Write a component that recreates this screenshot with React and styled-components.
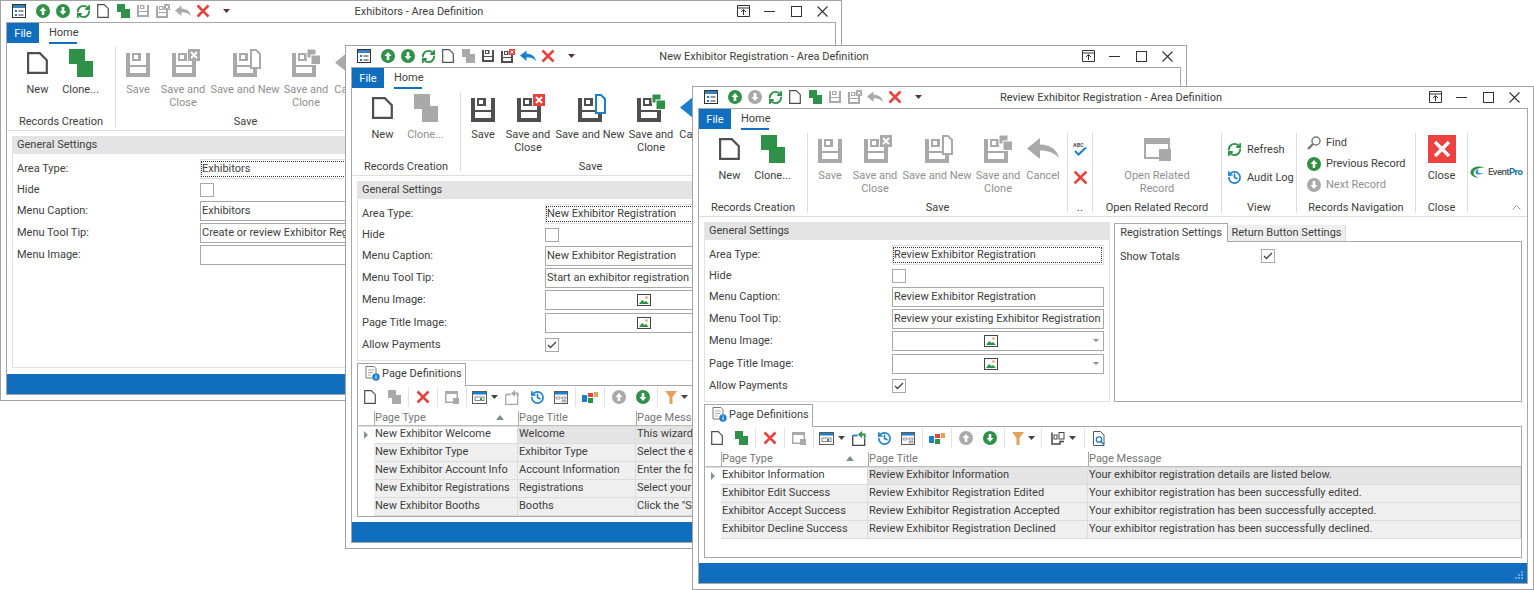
import React from 'react';
import styled, { createGlobalStyle } from 'styled-components';
import { RefreshCw, History } from 'lucide-react';

const C = { dark: '#4f4f4f', gray: '#a9a9a9', green: '#2f9148', red: '#e8403c', blue: '#1b7fcc', orange: '#e3a25c', line: '#a8a8a8', soft: '#dedede', text: '#404040' };

const GlobalStyle = createGlobalStyle`
  html, body { margin: 0; padding: 0; background: #fff; }
  body { font-family: Roboto, "Liberation Sans", sans-serif; font-size: 11px; color: ${C.text}; }
  * { box-sizing: border-box; }
`;

const Desktop = styled.div`position: relative; width: 1534px; height: 590px; overflow: hidden; background: #fff;`;
const WindowFrame = styled.section`
  position: absolute; left: ${p => p.$left}px; top: ${p => p.$top}px; width: 842px; height: ${p => p.$height}px;
  border: 1px solid #a3a3a3; background: #fff; display: flex; flex-direction: column; overflow: hidden;
`;
const TitleBar = styled.header`display: grid; grid-template-columns: 1fr auto 1fr; align-items: center; height: 20px; padding: 0 12px 0 8px; flex: none;`;
const Quick = styled.div`display: flex; align-items: center;`;
const QuickCell = styled.span`width: 20px; height: 20px; display: flex; align-items: center; justify-content: center; margin-left: ${p => p.$ml || 0}px;`;
const Title = styled.h1`margin: 0; font-size: 11px; font-weight: 400; color: ${C.text}; white-space: nowrap;`;
const Controls = styled.div`display: flex; justify-content: flex-end; margin-right: -7px;`;
const ControlCell = styled.span`width: 26.5px; height: 20px; display: flex; align-items: center; justify-content: center;`;
const Inner = styled.div`flex: 1; margin: 1px 5px 5px; border: 1px solid ${C.line}; display: flex; flex-direction: column; min-height: 0; position: relative; overflow: hidden;`;
const TabRow = styled.nav`display: flex; height: 21px; flex: none;`;
const FileTab = styled.span`width: 32px; height: 20px; background: #106ebe; color: #fff; display: flex; align-items: center; justify-content: center;`;
const HomeTab = styled.span`margin-left: 10px; width: 28px; text-align: center; height: 21px; border-bottom: 2px solid #106ebe; line-height: 19px; color: ${C.text};`;
const Ribbon = styled.div`display: flex; height: 87px; flex: none; border-bottom: 1px solid ${C.soft}; padding-top: 3px;`;
const Group = styled.div`width: ${p => p.$w}px; height: 80px; flex: none; display: flex; flex-direction: column; border-right: 1px solid ${p => p.$last ? 'transparent' : C.soft}; position: relative;`;
const GroupBody = styled.div`
  flex: 1; display: flex; min-height: 0; padding-left: ${p => p.$pl || 0}px;
  flex-direction: ${p => p.$col ? 'column' : 'row'};
  justify-content: ${p => p.$center ? 'center' : 'flex-start'};
`;
const GroupLabel = styled.div`height: 14px; line-height: 14px; margin-bottom: -2px; text-align: center; white-space: nowrap; overflow: hidden; color: ${C.text}; flex: none;`;
const Big = styled.button`
  all: unset; box-sizing: border-box; width: ${p => p.$w}px; flex: none; display: flex; flex-direction: column; align-items: center; padding-top: 2px;
  color: ${p => p.$off ? '#8f8f8f' : C.text}; text-align: center; line-height: 13px; font-size: 11px; font-family: Roboto, sans-serif;
`;
const BigIcon = styled.span`height: 28px; display: flex; align-items: flex-start; justify-content: center; margin-bottom: 6px;`;
const BigText = styled.span`white-space: pre;`;
const Small = styled.div`
  display: flex; align-items: center; gap: ${p => p.$gap || 5}px; height: ${p => p.$h}px; white-space: nowrap; color: ${p => p.$off ? '#8f8f8f' : C.text};
`;
const Stack = styled.div`display: flex; flex-direction: column; margin-top: ${p => p.$mt || 0}px; padding-left: ${p => p.$pl || 0}px;`;
const Mini = styled.span`width: 24px; height: 28px; display: flex; align-items: center; justify-content: center;`;
const LogoBox = styled.div`flex: 1; display: flex; align-items: flex-start; padding: 33px 0 0 2px; gap: 1px;`;
const LogoText = styled.span`font-size: 9.5px; font-weight: 500; letter-spacing: -0.5px; color: #555; line-height: 11px;`;
const LogoPro = styled.span`color: #1b6fa8; font-weight: 700;`;
const Collapse = styled.span`position: absolute; right: 5px; bottom: 3px; display: flex;`;
const Content = styled.div`flex: 1; min-height: 0; padding: 5px 5px 6px; display: flex; flex-direction: column;`;
const TopRow = styled.div`display: flex; gap: 4px; flex: ${p => p.$grow ? 1 : 'none'}; height: ${p => p.$grow ? 'auto' : '180px'}; min-height: 0;`;
const Panel = styled.div`width: ${p => p.$w}px; flex: none; border: 1px solid #e2e2e2; display: flex; flex-direction: column;`;
const PanelHead = styled.div`height: 18px; background: #e4e4e4; line-height: 17px; padding-left: 5px; margin: -1px -1px 0 -1px; color: ${C.text};`;
const Form = styled.div`padding: 5px 0 0 4px;`;
const Row = styled.div`display: grid; grid-template-columns: 183px ${p => p.$field}px; align-items: center; height: 20px; margin-top: ${p => p.$mt || 0}px;`;
const Label = styled.span`white-space: nowrap; color: ${C.text}; padding-bottom: 2px;`;
const Field = styled.div`
  height: 20px; border: 1px solid ${C.line}; padding-left: 1px; line-height: 18px; white-space: nowrap; overflow: hidden; color: ${C.text};
`;
const FocusField = styled.div`height: 20px; border: 1px solid #e0e0e0; padding: 1px 1px 1px 0; line-height: 14px; overflow: hidden; white-space: nowrap;`;
const FocusInner = styled.div`height: 16px; border: 1px dotted #333; line-height: 14px; overflow: hidden;`;
const ImageField = styled.div`height: 20px; border: 1px solid ${C.line}; position: relative; display: flex; align-items: center; justify-content: center; padding-right: 14px;`;
const Caret = styled.span`position: absolute; right: 4px; top: 7px; width: 0; height: 0; border: 3px solid transparent; border-top: 3px solid #8a8a8a;`;
const Check = styled.span`width: 14px; height: 14px; border: 1px solid ${C.line}; display: flex; align-items: center; justify-content: center;`;
const SidePanel = styled.div`flex: 1; min-width: 0; display: flex; flex-direction: column;`;
const SideTabs = styled.div`display: flex; height: 18px; flex: none; margin-top: 1px;`;
const SideTab = styled.span`
  width: ${p => p.$w}px; text-align: center; white-space: nowrap; line-height: ${p => p.$on ? 18 : 16}px; z-index: 1;
  ${p => p.$on
    ? `height: 19px; background: #fff; border: 1px solid ${C.line}; border-bottom: 0;`
    : `height: 16px; margin-top: 2px; background: #eee; border-right: 1px solid #ddd;`}
`;
const SideBox = styled.div`flex: 1; border: 1px solid ${C.line}; padding: 5px 5px;`;
const ToggleRow = styled.div`display: grid; grid-template-columns: 141px 20px; align-items: center; height: 18px;`;
const ToggleLabel = styled.span`white-space: nowrap;`;
const Bottom = styled.div`height: 154px; flex: none; margin-top: 2px; display: flex; flex-direction: column;`;
const DefTab = styled.div`width: 109px; height: 23px; margin-bottom: -1px; border: 1px solid ${C.line}; border-bottom: 0; display: flex; align-items: center; gap: 2px; padding: 0 0 3px 7px; background: #fff; z-index: 1; flex: none; white-space: nowrap;`;
const DefBox = styled.div`flex: 1; min-height: 0; border: 1px solid ${C.line}; overflow: hidden; background: #fff;`;
const Toolbar = styled.div`height: 25px; padding-bottom: 3px; display: flex; align-items: center;`;
const Tool = styled.span`width: ${p => p.$w || 24}px; height: 22px; display: flex; align-items: center; justify-content: center; gap: 4px; flex: none;`;
const ToolSep = styled.span`width: 1px; height: 20px; background: #e2e2e2; margin: 0 2px; flex: none;`;
const GridRow = styled.div`display: grid; grid-template-columns: 16px ${p => p.$type}px ${p => p.$title}px 1fr;`;
const Head = styled.div`height: 15px; line-height: 14px; border-bottom: 1px solid #bdbdbd; color: #767676; position: relative; white-space: nowrap; box-shadow: 0 1px 0 #dcdcdc; border-left: 1px solid ${p => p.$first ? 'transparent' : '#aaa'}; overflow: hidden;`;
const Sort = styled.span`position: absolute; right: 14px; top: 4px; width: 0; height: 0; border: 4.5px solid transparent; border-top: 0; border-bottom: 5px solid #7c9088;`;
const Cell = styled.div`
  height: 18px; line-height: 15px; padding-left: 1px; white-space: nowrap; overflow: hidden; color: ${C.text}; border-bottom: 1px solid #dcdcdc; border-right: 1px solid #dcdcdc;
  background: ${p => p.$tone === 'plain' ? '#fff' : p.$tone === 'sel' ? '#e4e4e4' : '#efefef'};
`;
const Indicator = styled.div`height: 18px; display: flex; align-items: center; padding-left: 6px;`;
const IndicatorArrow = styled.span`width: 0; height: 0; border: 4px solid transparent; border-right: 0; border-left: 4px solid #84948c;`;
const Status = styled.footer`height: 20px; background: #106ebe; flex: none;`;
const Grip = styled.span`position: absolute; right: 3px; bottom: 3px; display: flex;`;

const Ico = ({ w = 16, h = 16, vb, children }) => <svg width={w} height={h} viewBox={vb || `0 0 ${w} ${h}`} fill="none" aria-hidden="true">{children}</svg>;

const FLOPPY = 'M0 0h4v12h16V0h4v24H0z M4 14v6h16v-6z M6 0h9v8H6z M8 2v4h4V2z';
const Floppy = ({ c }) => <path fillRule="evenodd" fill={c} d={FLOPPY} />;
const SaveBig = ({ c }) => <Ico w={24} h={28}><g transform="translate(0 4)"><Floppy c={c} /></g></Ico>;
const SaveCloseBig = ({ c, mark }) => (
  <Ico w={33} h={28} vb="-5 0 33 28"><g transform="translate(0 4)"><Floppy c={c} /></g><rect x="16" y="0" width="12" height="12" fill={mark} /><path d="M19 3l6 6M25 3l-6 6" stroke="#fff" strokeWidth="2" /></Ico>
);
const SaveNewBig = ({ c, mark }) => (
  <Ico w={32} h={28} vb="-4 0 32 28"><g transform="translate(0 4)"><Floppy c={c} /></g><path d="M17 0h7l4 4v16H17z" fill="#fff" /><path d="M18 1h5l4 4v14H18z" fill="#fff" stroke={mark} strokeWidth="2" /></Ico>
);
const SaveCloneBig = ({ c, mark }) => (
  <Ico w={29} h={28}><g transform="translate(0 4)"><Floppy c={c} /></g><rect x="15" y="0" width="9" height="9" fill={mark} stroke="#fff" /><rect x="19" y="6" width="9.500" height="9.500" fill={mark} stroke="#fff" /></Ico>
);
const CancelBig = ({ c }) => <Ico w={32} h={28}><path fill={c} d="M0 13.500L13 3v6.500c10 0 17 5 19 13.500-5-5.500-11-7.500-19-7.500V24z" /></Ico>;
const DocBig = () => <Ico w={21} h={28}><path d="M1.100 4.100h11.700l7 7v12.800H1.100z" stroke={C.dark} strokeWidth="2.200" strokeMiterlimit="10" fill="#fff" /></Ico>;
const CloneBig = ({ c }) => <Ico w={24} h={28}><rect x="0" y="0" width="16" height="15" fill={c} /><rect x="8" y="12" width="16" height="16" fill={c} /></Ico>;
const RelatedBig = ({ c }) => <Ico w={28} h={28}><rect x="1" y="3" width="26" height="6" fill={c} /><rect x="1" y="3" width="2" height="21" fill={c} /><rect x="1" y="22" width="15" height="2" fill={c} /><rect x="25" y="3" width="2" height="11" fill={c} /><rect x="16" y="14" width="12" height="12" fill={c} /></Ico>;
const CloseBig = () => <Ico w={28} h={28}><rect width="28" height="28" fill="#ef4140" /><path d="M7 7l14 14M21 7L7 21" stroke="#fff" strokeWidth="3.400" /></Ico>;
const RedX = ({ s = 14, c = C.red }) => <Ico w={s} h={s} vb="0 0 14 14"><path d="M1.500 1.500l11 11M12.500 1.500l-11 11" stroke={c} strokeWidth="2.500" /></Ico>;
const Circle = ({ dir, c }) => <Ico w={14} h={14}><circle cx="7" cy="7" r="7" fill={c} /><path d={dir === 'up' ? 'M7 3L3.500 7h2.200v4h2.600V7h2.200z' : 'M7 11L3.500 7h2.200V3h2.600v4h2.200z'} fill="#fff" /></Ico>;
const Doc = () => <Ico w={12} h={14}><path d="M.700.700h6.600l4 4v8.600H.700z" stroke={C.dark} strokeWidth="1.200" fill="#fff" /></Ico>;
const Clone = ({ c }) => <Ico w={13} h={14}><rect width="8" height="8" fill={c} /><rect x="4" y="5" width="9" height="9" fill={c} /></Ico>;
const SaveSmall = ({ c }) => <Ico w={12} h={12} vb="0 0 24 24"><Floppy c={c} /></Ico>;
const SaveCloseSmall = ({ c, mark }) => <Ico w={14} h={14}><g transform="translate(0 2) scale(.5)"><Floppy c={c} /></g><rect x="8" y="0" width="6" height="6" fill={mark} /><path d="M9.500 1.500l3 3M12.500 1.500l-3 3" stroke="#fff" /></Ico>;
const Undo = ({ c }) => <Ico w={16} h={12} vb="0 0 32 24"><path fill={c} d="M0 11L13 1v6.500c10 0 17 5 19 14.500-5-5.500-11-7.500-19-7.500V22z" /></Ico>;
const AppIcon = () => <Ico w={14} h={14}><rect x=".500" y=".500" width="13" height="13" fill="#fff" stroke="#333" /><rect x="1" y="1" width="12" height="3" fill="#3a80bc" /><rect x="3" y="6" width="2" height="2" fill={C.blue} /><rect x="3" y="10" width="2" height="2" fill={C.blue} /><path d="M6.500 7h5M6.500 11h5" stroke="#333" /></Ico>;
const DropCaret = ({ c = '#55333a' }) => <Ico w={7} h={4}><path d="M0 0h7L3.500 4z" fill={c} /></Ico>;
const Pin = () => <Ico w={13} h={12}><path d="M.500 .500h12v11H.500zM.500 3h12" stroke="#333" /><path d="M6.500 10V5M4 7l2.500-2.500L9 7" stroke="#333" /></Ico>;
const Min = () => <Ico w={11} h={3}><path d="M0 1.500h11" stroke="#333" /></Ico>;
const Max = () => <Ico w={11} h={11}><rect x=".500" y=".500" width="10" height="10" stroke="#333" /></Ico>;
const WinX = () => <Ico w={11} h={11}><path d="M.500 .500l10 10M10.500 .500l-10 10" stroke="#333" strokeWidth="1.100" /></Ico>;
const Spell = () => <Ico w={16} h={16}><text x="1" y="6" fontSize="5.500" fontWeight="700" fill="#555" fontFamily="Roboto, sans-serif">ABC</text><path d="M3 10l3.500 3.500L14 6.500" stroke={C.blue} strokeWidth="2" /></Ico>;
const Find = () => <Ico w={14} h={14}><circle cx="9" cy="5" r="4" stroke="#777" strokeWidth="1.500" fill="#fff" /><path d="M6 8L1 13" stroke="#777" strokeWidth="2.400" /></Ico>;
const Swirl = () => <Ico w={17} h={12}><path d="M15 1.500C9 -1 1 1 .500 6c-.300 3 3 5.500 8 5.500C4 10 3 7.500 4 5.500 5.500 3 10 1.500 15 1.500z" fill="#2f9148" /><path d="M9 3.500c-3 0-4 2.500-3 4 2 1.500 5 1 8-.500-3 .500-5 .500-6-.500-.500-1 0-2.200 1-3z" fill="#1b7fcc" /></Ico>;
const Chevron = () => <Ico w={9} h={5}><path d="M.500 4.500l4-4 4 4" stroke="#999" /></Ico>;
const ImageIcon = () => <Ico w={14} h={12}><rect x=".500" y=".500" width="13" height="11" fill="#fff" stroke="#444" /><path d="M2 10l3-4 2.500 2 1.500-1 3 3z" fill={C.green} /><circle cx="9.500" cy="3.500" r="1.300" fill={C.orange} /></Ico>;
const Tick = () => <Ico w={10} h={8}><path d="M1 4l2.500 2.500L9 1" stroke="#444" strokeWidth="1.300" /></Ico>;
const PageInfo = () => <Ico w={15} h={15}><path d="M1 .500h8l2 2v9.500H1z" fill="#fff" stroke="#777" /><path d="M3 4h6M3 6.500h5M3 9h3" stroke="#aaa" /><circle cx="11" cy="11" r="3.700" fill={C.blue} /><path d="M11 10v3M11 8.500v1" stroke="#fff" /></Ico>;
const RelatedSmall = () => <Ico w={14} h={13}><rect x="0" y="0" width="13" height="3" fill={C.gray} /><rect x="0" y="0" width="1.500" height="12" fill={C.gray} /><rect x="0" y="10.500" width="8" height="1.500" fill={C.gray} /><rect x="11.500" y="0" width="1.500" height="7" fill={C.gray} /><rect x="8" y="7" width="6" height="6" fill={C.gray} /></Ico>;
const FormIcon = () => <Ico w={15} h={13}><rect x=".500" y=".500" width="14" height="12" fill="#fff" stroke="#5b5b5b" /><rect x="1" y="1" width="13" height="2.500" fill={C.blue} /><rect x="3" y="6" width="9" height="3.500" stroke="#888" /><rect x="8" y="7" width="2" height="2" fill={C.green} /></Ico>;
const ExportIcon = ({ c, a, t }) => <Ico w={16} h={15}><path d="M.700 4.500v10h12V8" stroke={c} strokeWidth="1.300" /><path d="M.700 4.500h5" stroke={t} strokeWidth="1.800" /><path d="M9.500 3.500h3.200v4" stroke={a} strokeWidth="1.800" /><path d="M10 0L5.800 3.500 10 7z" fill={a} /></Ico>;
const LayoutIcon = () => <Ico w={14} h={13}><rect x=".500" y=".500" width="13" height="12" fill="#fff" stroke="#5b5b5b" /><rect x="1" y="1" width="12" height="2.500" fill={C.blue} /><path d="M2 6h4v2H2zM8 6h4v2H8zM8 9.500h4v1.500H8z" stroke="#777" strokeWidth=".700" /></Ico>;
const Blocks = () => <Ico w={16} h={11}><rect x="0" y="3" width="5" height="7" fill={C.blue} /><rect x="6" y="1" width="5" height="4" fill={C.red} /><rect x="6" y="6" width="5" height="5" fill={C.green} /><rect x="12" y="0" width="4" height="5" fill={C.orange} /></Ico>;
const Funnel = () => <Ico w={12} h={13}><path d="M0 0h12L7.500 6v7H4.500V6z" fill={C.orange} /></Ico>;
const ColumnsIcon = () => <Ico w={14} h={13}><path d="M1 .500v11.500h8v-2.500h4" stroke="#444" strokeWidth="1.500" /><rect x="3" y="3" width="3" height="4" stroke="#444" /><rect x="8" y=".500" width="5" height="6.500" stroke="#444" /></Ico>;
const PreviewIcon = () => <Ico w={13} h={15}><path d="M.500 .500h7l3.500 3.500v10.500H.500z" stroke="#4a5a70" fill="#fff" /><circle cx="6" cy="8.500" r="2.700" stroke={C.blue} strokeWidth="1.300" /><path d="M8 10.500l3 3" stroke={C.blue} strokeWidth="1.500" /></Ico>;
const GripDots = () => <Ico w={10} h={10}><g fill="#6fa5d4"><rect x="7" y="1" width="2" height="2" /><rect x="4" y="4" width="2" height="2" /><rect x="7" y="4" width="2" height="2" /><rect x="1" y="7" width="2" height="2" /><rect x="4" y="7" width="2" height="2" /><rect x="7" y="7" width="2" height="2" /></g></Ico>;

const WINDOWS = [
  {
    id: 'exhibitors', left: 0, top: 0, height: 401, title: 'Exhibitors - Area Definition', panel: 816, field: 606,
    upOn: true, downOn: true, cloneOn: true, saveOn: false,
    area: 'Exhibitors', caption: 'Exhibitors', tip: 'Create or review Exhibitor Registrations',
  },
  {
    id: 'new', left: 345, top: 45, height: 504, title: 'New Exhibitor Registration - Area Definition', panel: 406, field: 212,
    upOn: true, downOn: true, cloneOn: false, saveOn: true,
    area: 'New Exhibitor Registration', caption: 'New Exhibitor Registration', tip: 'Start an exhibitor registration', full: true,
    type: 144, titleCol: 118, exportOn: false,
    rows: [
      ['New Exhibitor Welcome', 'Welcome', 'This wizard will guide you through your registration.'],
      ['New Exhibitor Type', 'Exhibitor Type', 'Select the exhibitor type.'],
      ['New Exhibitor Account Info', 'Account Information', 'Enter the following details.'],
      ['New Exhibitor Registrations', 'Registrations', 'Select your registrations.'],
      ['New Exhibitor Booths', 'Booths', 'Click the "Select" button.'],
      ['', '', ''],
    ],
  },
  {
    id: 'review', left: 692, top: 86, height: 504, title: 'Review Exhibitor Registration - Area Definition', panel: 406, field: 212,
    upOn: true, downOn: false, cloneOn: true, saveOn: false, grip: true,
    area: 'Review Exhibitor Registration', caption: 'Review Exhibitor Registration', tip: 'Review your existing Exhibitor Registration', full: true, side: true,
    type: 147, titleCol: 220, exportOn: true,
    rows: [
      ['Exhibitor Information', 'Review Exhibitor Information', 'Your exhibitor registration details are listed below.'],
      ['Exhibitor Edit Success', 'Review Exhibitor Registration Edited', 'Your exhibitor registration has been successfully edited.'],
      ['Exhibitor Accept Success', 'Review Exhibitor Registration Accepted', 'Your exhibitor registration has been successfully accepted.'],
      ['Exhibitor Decline Success', 'Review Exhibitor Registration Declined', 'Your exhibitor registration has been successfully declined.'],
    ],
  },
];

const AreaWindow = ({ w }) => {
  const saveC = w.saveOn ? C.dark : C.gray;
  const mark = (on) => (w.saveOn ? on : C.gray);
  return (
    <WindowFrame $left={w.left} $top={w.top} $height={w.height}>
      <TitleBar>
        <Quick>
          <QuickCell><AppIcon /></QuickCell>
          <QuickCell $ml={4}><Circle dir="up" c={w.upOn ? C.green : C.gray} /></QuickCell>
          <QuickCell><Circle dir="down" c={w.downOn ? C.green : C.gray} /></QuickCell>
          <QuickCell><RefreshCw size={15} color={C.green} strokeWidth={3} /></QuickCell>
          <QuickCell><Doc /></QuickCell>
          <QuickCell><Clone c={w.cloneOn ? C.green : C.gray} /></QuickCell>
          <QuickCell><SaveSmall c={saveC} /></QuickCell>
          <QuickCell><SaveCloseSmall c={saveC} mark={mark(C.red)} /></QuickCell>
          <QuickCell><Undo c={w.saveOn ? C.blue : C.gray} /></QuickCell>
          <QuickCell><RedX /></QuickCell>
          <QuickCell $ml={3}><DropCaret /></QuickCell>
        </Quick>
        <Title>{w.title}</Title>
        <Controls>
          <ControlCell><Pin /></ControlCell>
          <ControlCell><Min /></ControlCell>
          <ControlCell><Max /></ControlCell>
          <ControlCell><WinX /></ControlCell>
        </Controls>
      </TitleBar>
      <Inner>
        <TabRow><FileTab>File</FileTab><HomeTab>Home</HomeTab></TabRow>
        <Ribbon>
          <Group $w={109}>
            <GroupBody $pl={9}>
              <Big $w={43}><BigIcon><DocBig /></BigIcon><BigText>New</BigText></Big>
              <Big $w={43} $off={!w.cloneOn}><BigIcon><CloneBig c={w.cloneOn ? C.green : C.gray} /></BigIcon><BigText>Clone...</BigText></Big>
            </GroupBody>
            <GroupLabel>Records Creation</GroupLabel>
          </Group>
          <Group $w={260}>
            <GroupBody>
              <Big $w={44} $off={!w.saveOn}><BigIcon><SaveBig c={saveC} /></BigIcon><BigText>Save</BigText></Big>
              <Big $w={46} $off={!w.saveOn}><BigIcon><SaveCloseBig c={saveC} mark={mark(C.red)} /></BigIcon><BigText>{'Save and\nClose'}</BigText></Big>
              <Big $w={78} $off={!w.saveOn}><BigIcon><SaveNewBig c={saveC} mark={mark(C.blue)} /></BigIcon><BigText>Save and New</BigText></Big>
              <Big $w={44} $off={!w.saveOn}><BigIcon><SaveCloneBig c={saveC} mark={mark(C.green)} /></BigIcon><BigText>{'Save and\nClone'}</BigText></Big>
              <Big $w={46} $off={!w.saveOn}><BigIcon><CancelBig c={w.saveOn ? C.blue : C.gray} /></BigIcon><BigText>Cancel</BigText></Big>
            </GroupBody>
            <GroupLabel>Save</GroupLabel>
          </Group>
          <Group $w={25}>
            <GroupBody $col>
              <Stack $mt={2}><Mini><Spell /></Mini><Mini><RedX s={15} /></Mini></Stack>
            </GroupBody>
            <GroupLabel>..</GroupLabel>
          </Group>
          <Group $w={129}>
            <GroupBody $center>
              <Big $w={129} $off><BigIcon><RelatedBig c={C.gray} /></BigIcon><BigText>{'Open Related\nRecord'}</BigText></Big>
            </GroupBody>
            <GroupLabel>Open Related Record</GroupLabel>
          </Group>
          <Group $w={75}>
            <GroupBody $col>
              <Stack $mt={2} $pl={5}>
                <Small $h={28}><RefreshCw size={15} color={C.green} strokeWidth={3} />Refresh</Small>
                <Small $h={28}><History size={15} color={C.blue} strokeWidth={2.600} />Audit Log</Small>
              </Stack>
            </GroupBody>
            <GroupLabel>View</GroupLabel>
          </Group>
          <Group $w={119}>
            <GroupBody $col>
              <Stack $mt={-1} $pl={10}>
                <Small $h={21}><Find />Find</Small>
                <Small $h={21}><Circle dir="up" c={w.upOn ? C.green : C.gray} />Previous Record</Small>
                <Small $h={21} $off={!w.downOn}><Circle dir="down" c={w.downOn ? C.green : C.gray} />Next Record</Small>
              </Stack>
            </GroupBody>
            <GroupLabel>Records Navigation</GroupLabel>
          </Group>
          <Group $w={52}>
            <GroupBody $center>
              <Big $w={50}><BigIcon><CloseBig /></BigIcon><BigText>Close</BigText></Big>
            </GroupBody>
            <GroupLabel>Close</GroupLabel>
          </Group>
          <Group $w={59} $last>
            <LogoBox><Swirl /><LogoText>Event<LogoPro>Pro</LogoPro></LogoText></LogoBox>
            <Collapse><Chevron /></Collapse>
          </Group>
        </Ribbon>
        <Content>
          <TopRow $grow={!w.full}>
            <Panel $w={w.panel}>
              <PanelHead>General Settings</PanelHead>
              <Form>
                <Row $field={w.field}><Label>Area Type:</Label><FocusField><FocusInner>{w.area}</FocusInner></FocusField></Row>
                <Row $field={w.field} $mt={1}><Label>Hide</Label><Check /></Row>
                <Row $field={w.field} $mt={1}><Label>Menu Caption:</Label><Field>{w.caption}</Field></Row>
                <Row $field={w.field} $mt={2}><Label>Menu Tool Tip:</Label><Field>{w.tip}</Field></Row>
                <Row $field={w.field} $mt={2}><Label>Menu Image:</Label><ImageField><ImageIcon /><Caret /></ImageField></Row>
                {w.full && <Row $field={w.field} $mt={3}><Label>Page Title Image:</Label><ImageField><ImageIcon /><Caret /></ImageField></Row>}
                {w.full && <Row $field={w.field} $mt={2}><Label>Allow Payments</Label><Check><Tick /></Check></Row>}
              </Form>
            </Panel>
            {w.side && (
              <SidePanel>
                <SideTabs>
                  <SideTab $w={114} $on>Registration Settings</SideTab>
                  <SideTab $w={118}>Return Button Settings</SideTab>
                </SideTabs>
                <SideBox>
                  <ToggleRow><ToggleLabel>Show Totals</ToggleLabel><Check><Tick /></Check></ToggleRow>
                </SideBox>
              </SidePanel>
            )}
          </TopRow>
          {w.full && (
            <Bottom>
              <DefTab><PageInfo />Page Definitions</DefTab>
              <DefBox>
                <Toolbar>
                  <Tool><Doc /></Tool>
                  <Tool><Clone c={w.cloneOn ? C.green : C.gray} /></Tool>
                  <ToolSep />
                  <Tool><RedX /></Tool>
                  <ToolSep />
                  <Tool><RelatedSmall /></Tool>
                  <ToolSep />
                  <Tool $w={32}><FormIcon /><DropCaret c="#444" /></Tool>
                  <Tool><ExportIcon c={w.exportOn ? '#444' : C.gray} t={w.exportOn ? C.blue : C.gray} a={w.exportOn ? C.green : C.gray} /></Tool>
                  <Tool><History size={15} color={C.blue} strokeWidth={2.600} /></Tool>
                  <Tool><LayoutIcon /></Tool>
                  <ToolSep />
                  <Tool><Blocks /></Tool>
                  <ToolSep />
                  <Tool><Circle dir="up" c={C.gray} /></Tool>
                  <Tool><Circle dir="down" c={C.green} /></Tool>
                  <ToolSep />
                  <Tool $w={32}><Funnel /><DropCaret c="#444" /></Tool>
                  <ToolSep />
                  <Tool $w={38}><ColumnsIcon /><DropCaret c="#444" /></Tool>
                  <ToolSep />
                  <Tool><PreviewIcon /></Tool>
                </Toolbar>
                <GridRow $type={w.type} $title={w.titleCol}>
                  <Head $first />
                  <Head>Page Type<Sort /></Head>
                  <Head>Page Title</Head>
                  <Head>Page Message</Head>
                </GridRow>
                {w.rows.map((r, i) => (
                  <GridRow key={i} $type={w.type} $title={w.titleCol}>
                    <Indicator>{i === 0 && <IndicatorArrow />}</Indicator>
                    <Cell $tone={i === 0 ? 'plain' : 'alt'}>{r[0]}</Cell>
                    <Cell $tone={i === 0 ? 'sel' : 'alt'}>{r[1]}</Cell>
                    <Cell $tone={i === 0 ? 'sel' : 'alt'}>{r[2]}</Cell>
                  </GridRow>
                ))}
              </DefBox>
            </Bottom>
          )}
        </Content>
        <Status />
        {w.grip && <Grip><GripDots /></Grip>}
      </Inner>
    </WindowFrame>
  );
};

export default function App() {
  return (
    <Desktop>
      <GlobalStyle />
      {WINDOWS.map(w => <AreaWindow key={w.id} w={w} />)}
    </Desktop>
  );
}
